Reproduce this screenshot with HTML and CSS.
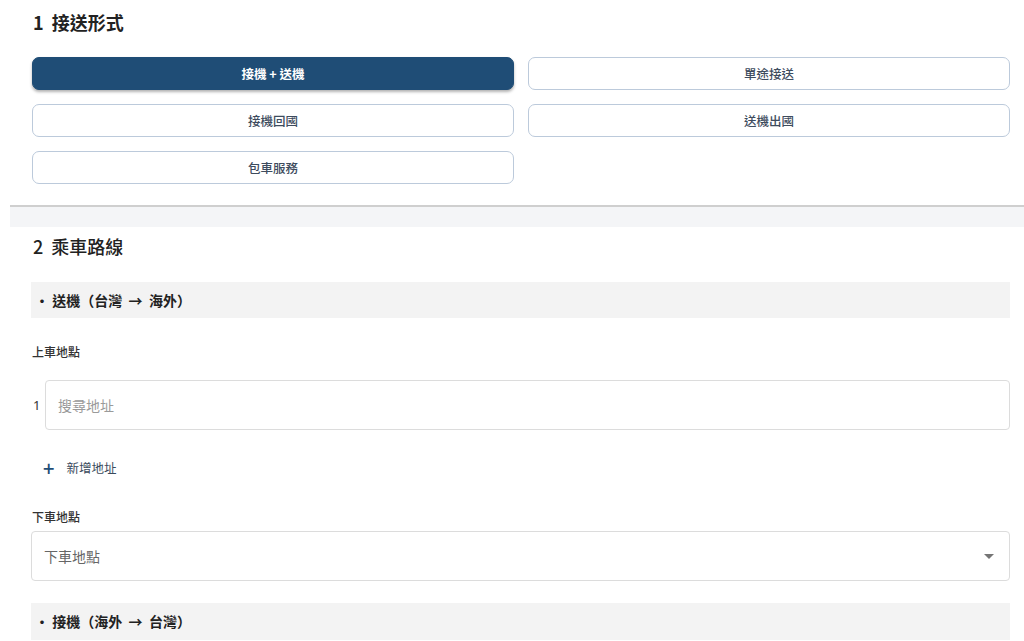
FILE: index.html
```html
<!DOCTYPE html>
<html lang="zh-Hant">
<head>
    <meta charset="UTF-8">
    <meta name="viewport" content="width=device-width, initial-scale=1.0">
    <title>預約接送</title>
    <link rel="stylesheet" href="styles.css">
</head>
<body>
    <div class="page">
        <section class="section section-type">
            <h2 class="section-title strong">1&nbsp; 接送形式</h2>
            <div class="type-grid">
                <button type="button" class="type-btn active">接機 + 送機</button>
                <button type="button" class="type-btn">單途接送</button>
                <button type="button" class="type-btn">接機回國</button>
                <button type="button" class="type-btn">送機出國</button>
                <button type="button" class="type-btn">包車服務</button>
            </div>
        </section>

        <div class="divider"></div>

        <section class="section section-route">
            <h2 class="section-title">2&nbsp; 乘車路線</h2>

            <div class="route-head">・ 送機（台灣 &nbsp;→&nbsp; 海外）</div>

            <div class="field-label">上車地點</div>
            <div class="stop-row">
                <span class="stop-no">1</span>
                <input type="text" class="text-input" placeholder="搜尋地址">
            </div>
            <button type="button" class="add-stop"><span class="plus">+</span>新增地址</button>

            <div class="field-label drop">下車地點</div>
            <div class="select-box">
                <span>下車地點</span>
                <span class="caret"></span>
            </div>

            <div class="route-head second">・ 接機（海外 &nbsp;→&nbsp; 台灣）</div>
        </section>
    </div>
</body>
</html>
```

FILE: styles.css
```css
body {
    margin: 0;
    font-family: "Noto Sans CJK TC", "Noto Sans", sans-serif;
    color: #222;
    background: #fff;
    overflow: hidden;
}
.page {
    margin-left: 10px;
}
.section {
    background: #fff;
    padding: 0 14px 0 21px;
}
.section-title {
    margin: 0;
    padding: 10px 0 0 2px;
    font-size: 18px;
    line-height: 24px;
    font-weight: 500;
    color: #222;
}
.section-title.strong {
    font-weight: 700;
}
.section-type {
    padding-bottom: 21px;
}
.type-grid {
    margin-top: 23px;
    display: grid;
    grid-template-columns: 1fr 1fr;
    gap: 14px;
    padding-left: 1px;
}
.type-btn {
    height: 33px;
    border: 1px solid #bccadb;
    border-radius: 7px;
    background: #fff;
    color: #3e4c5e;
    font-family: inherit;
    font-size: 12.5px;
    font-weight: 500;
    cursor: pointer;
}
.type-btn.active {
    background: #1f4d76;
    border-color: #1f4d76;
    color: #fff;
    font-weight: 700;
    box-shadow: 0 2px 3px rgba(0,0,0,0.3);
}
.divider {
    height: 20px;
    border-top: 2px solid #cfcfcf;
    background: #f4f5f7;
}
.section-route .section-title {
    padding-top: 7px;
}
.route-head {
    margin-top: 24px;
    height: 36px;
    line-height: 36px;
    padding-left: 4px;
    background: #f3f3f3;
    font-size: 14px;
    font-weight: 700;
    color: #222;
}
.route-head.second {
    margin-top: 22px;
    height: 37px;
}
.field-label {
    margin-top: 24px;
    padding-left: 1px;
    font-size: 12px;
    line-height: 20px;
    font-weight: 500;
    color: #333;
}
.field-label.drop {
    margin-top: 27px;
}
.stop-row {
    margin-top: 18px;
    display: flex;
    align-items: center;
}
.stop-no {
    width: 14px;
    padding-left: 2px;
    box-sizing: border-box;
    font-size: 13px;
    color: #333;
    font-family: "Noto Sans", sans-serif;
}
.text-input {
    flex: 1;
    height: 50px;
    box-sizing: border-box;
    border: 1px solid #dcdcdc;
    border-radius: 4px;
    padding: 0 12px;
    font-family: inherit;
    font-size: 14px;
    color: #333;
}
.text-input::placeholder {
    color: #9a9a9a;
}
.add-stop {
    margin: 26px 0 0 12px;
    padding: 0;
    border: none;
    background: none;
    font-family: inherit;
    font-size: 12.5px;
    line-height: 24px;
    color: #3a4a5c;
    display: flex;
    align-items: center;
    cursor: pointer;
}
.plus {
    font-size: 20px;
    font-weight: 500;
    color: #1f4d76;
    margin-right: 12px;
    line-height: 24px;
}
.select-box {
    margin-top: 4px;
    height: 50px;
    box-sizing: border-box;
    border: 1px solid #dcdcdc;
    border-radius: 4px;
    padding: 0 13px 0 12px;
    display: flex;
    align-items: center;
    justify-content: space-between;
    font-size: 14px;
    color: #666;
}
.caret {
    width: 0;
    height: 0;
    border-left: 5px solid transparent;
    border-right: 5px solid transparent;
    border-top: 5px solid #757575;
    margin-right: 2px;
}
```
